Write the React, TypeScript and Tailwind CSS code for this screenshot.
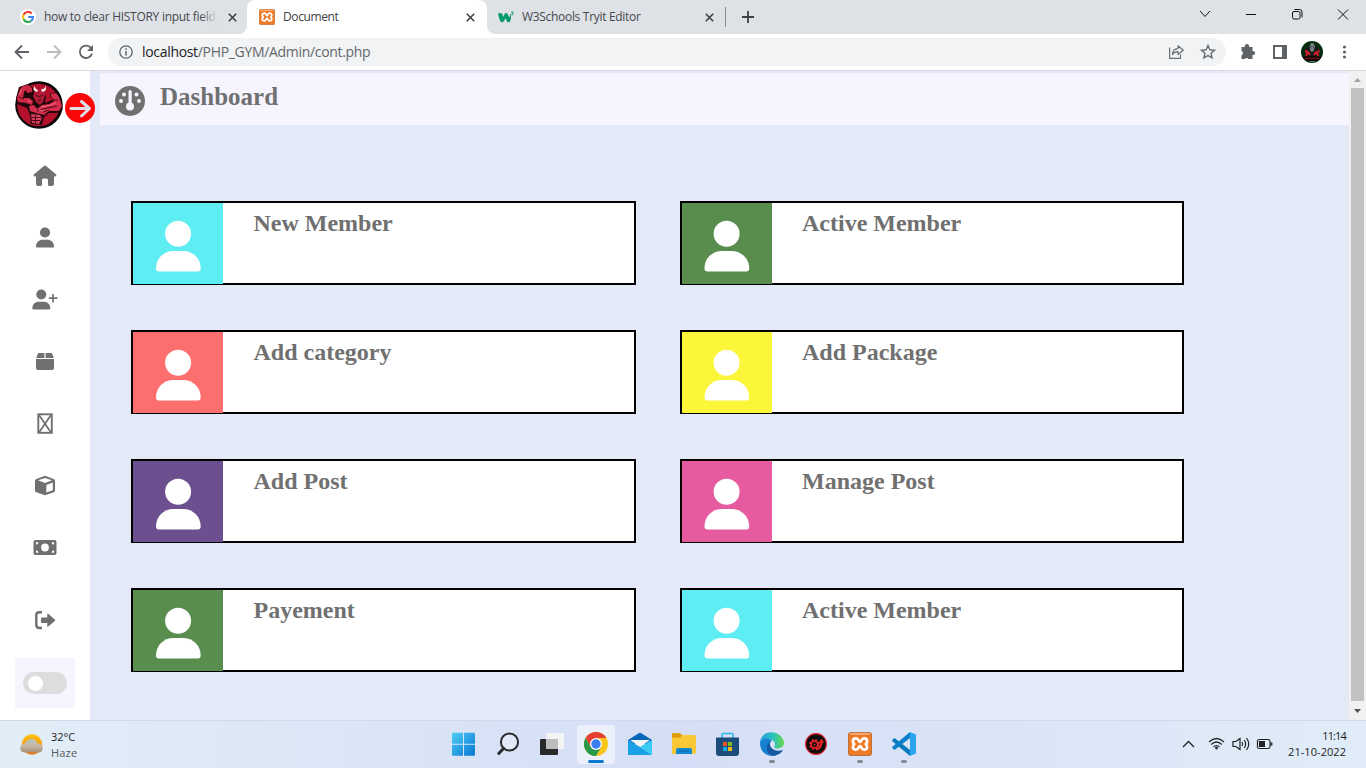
import React from "react";

const ui = "font-['Open_Sans','Noto_Sans',sans-serif]";

function XamppIcon({ size }: { size: number }) {
  return (
    <svg width={size} height={size} viewBox="0 0 24 24">
      <rect x="0.4" y="0.4" width="23.2" height="23.2" rx="2.5" fill="#ee7a28" stroke="#b5642a" strokeWidth="0.9" />
      <rect x="2" y="1.2" width="20" height="1.4" fill="#f9b98a" />
      <path
        d="M12 10C10.300 10 11 6.300 8 6.300C4.500 6.300 3.800 9.600 6.300 12C3.800 14.400 4.500 17.700 8 17.700C11 17.700 10.300 14 12 14C13.700 14 13 17.700 16 17.700C19.500 17.700 20.200 14.400 17.700 12C20.200 9.600 19.500 6.300 16 6.300C13 6.300 13.700 10 12 10Z"
        fill="none"
        stroke="#fff"
        strokeWidth="2.700"
        strokeLinejoin="round"
      />
    </svg>
  );
}

function CloseX() {
  return (
    <svg width="9" height="9" viewBox="0 0 9 9" className="shrink-0">
      <path d="M0.8 0.8 8.2 8.2M8.2 0.8 0.8 8.2" stroke="#3c4043" strokeWidth="1.6" />
    </svg>
  );
}

function TabStrip() {
  return (
    <div className="flex h-[34px] bg-white">
      <div className="flex w-[247px] items-center rounded-br-lg bg-[#dee1e6] pl-5">
        <svg width="16" height="16" viewBox="0 0 16 16" className="shrink-0">
          <circle cx="8" cy="8" r="8" fill="#fff" />
          <g fill="none" strokeWidth="2.2">
            <path d="M11.7 4.5A5 5 0 0 0 3.5 5.8" stroke="#ea4335" />
            <path d="M3.5 5.8A5 5 0 0 0 3.5 10.2" stroke="#fbbc05" />
            <path d="M3.5 10.2A5 5 0 0 0 11.2 11.8" stroke="#34a853" />
            <path d="M11.2 11.8A5 5 0 0 0 13 8H8.2" stroke="#4285f4" />
          </g>
        </svg>
        <div className="relative ml-2 w-[173px] whitespace-nowrap text-xs tracking-[-0.28px] text-[#45494d]">
          how to clear HISTORY input field
          <div className="absolute inset-y-0 right-0 w-4 bg-linear-to-r from-transparent to-[#dee1e6]" />
        </div>
        <div className="ml-[11px] flex">
          <CloseX />
        </div>
      </div>
      <div className="w-[240px] bg-[#dee1e6]">
        <div className="flex h-full items-center rounded-t-lg bg-white pl-3">
          <XamppIcon size={16} />
          <span className="ml-2 flex-1 text-xs tracking-[-0.38px] text-[#3c4043]">Document</span>
          <div className="mr-[12px]">
            <CloseX />
          </div>
        </div>
      </div>
      <div className="flex flex-1 items-center rounded-bl-lg bg-[#dee1e6] pl-[11px]">
        <svg width="17" height="12" viewBox="0 0 17 12">
          <path d="M0 2.2H4L5.2 6 7 2.2H9.2L11.2 6.5 12.5 4.5C11 3 12.8 2 13 4.2 13.2 7 12.5 11.3 10.6 11.3 9 11.3 8.4 9 7.6 7 6.5 9.5 5.5 11.3 4 11.3 2 11.3 1.2 7 0 2.2Z" fill="#04996a" />
          <path d="M13 1H15.3L14.3 2.2C16 2.2 15.6 4.4 13.2 3.8" fill="none" stroke="#04996a" strokeWidth=".9" />
        </svg>
        <span className="ml-[7px] w-[183px] text-xs tracking-[-0.31px] text-[#45494d]">W3Schools Tryit Editor</span>
        <CloseX />
        <div className="ml-[11px] h-5 w-px bg-[#8a8d91]" />
        <svg width="12" height="12" viewBox="0 0 12 12" className="ml-4">
          <path d="M6 0V12M0 6H12" stroke="#3c4043" strokeWidth="1.8" />
        </svg>
        <svg width="150" height="28" viewBox="0 0 150 28" className="mr-4 mb-[6px] ml-auto">
          <g fill="none" stroke="#111" strokeWidth="1">
            <path d="M0 11 5 16.5 10 11M46 14.5H56M138 9.5 148 19.5M148 9.5 138 19.5" />
            <rect x="92.500" y="11.5" width="7.500" height="7.500" rx="1.500" />
            <path d="M94.500 9.500H99.500Q102 9.500 102 12V17.500" />
          </g>
        </svg>
      </div>
    </div>
  );
}

function Toolbar() {
  return (
    <div className="flex h-[37px] items-center border-b border-[#d9dadc] bg-white">
      <svg width="108" height="36" viewBox="0 0 108 36" className="shrink-0">
        <g fill="none" strokeWidth="1.8">
          <path d="M29 18H16M22 11.500 15.500 18 22 24.500" stroke="#5f6368" />
          <path d="M47 18H60M54 11.500 60.500 18 54 24.500" stroke="#babcbe" />
          <path d="M91.300 14.500A6.200 6.200 0 1 0 92 19.500" stroke="#5f6368" />
        </g>
        <path d="M93 11V17H87Z" fill="#5f6368" />
      </svg>
      <div className="flex h-7 w-[1118px] items-center rounded-full bg-[#f1f3f4] pl-[11px]">
        <svg width="14" height="14" viewBox="0 0 14 14">
          <circle cx="7" cy="7" r="6.200" fill="none" stroke="#5f6368" strokeWidth="1.300" />
          <path d="M7 6V10.500M7 3.300V4.800" stroke="#5f6368" strokeWidth="1.500" />
        </svg>
        <span className="ml-[9px] text-sm tracking-[-0.32px] text-[#63676b]">
          <span className="text-[#202124]">localhost</span>/PHP_GYM/Admin/cont.php
        </span>
        <svg width="52" height="20" viewBox="0 0 52 20" className="mr-[7px] ml-auto">
          <g fill="none" stroke="#6b6f73" strokeWidth="1.200">
            <path d="M2.600 5.500V16.400H13.500V12.500" />
            <path d="M5.500 12.500C5.500 9 7.500 6.800 11 6.700V3.800L16.300 8.300 11 12.500V9.700C8.500 9.600 7 10.300 5.500 12.500Z" strokeLinejoin="round" />
            <path d="M41 3.500 42.900 7.700 47.500 8.200 44.100 11.300 45 15.800 41 13.500 37 15.800 37.900 11.300 34.500 8.200 39.100 7.700Z" strokeWidth="1.500" />
          </g>
        </svg>
      </div>
      <svg width="140" height="36" viewBox="0 0 140 36" className="shrink-0">
        <path d="M15.500 13H19A2.200 2.200 0 1 1 23 13H26.500V17.200A2 2 0 1 1 26.500 21V25H22.500A2.200 2.200 0 0 0 18.800 25H15.500V21.200A2.200 2.200 0 0 0 15.500 17Z" fill="#5f6368" />
        <path d="M47 11H61V25H47ZM49 13V23H56V13Z" fill="#5f6368" fillRule="evenodd" />
        <circle cx="86" cy="18" r="11" fill="#062c10" />
        <path d="M79 15 83 12H89L93 15V23H79Z" fill="#15191a" />
        <path d="M76.500 22.500H95.500Q94 26 91 27H81Q78 26 76.500 22.500Z" fill="#100506" />
        <path d="M80 22 82 18 84 21M88 21 90 18 92.500 22M80 16V19M92.500 16V19" stroke="#e02325" strokeWidth="1.700" fill="none" />
        <path d="M79 24.300H93" stroke="#8c1518" strokeWidth="1" />
        <path d="M84.500 10 86 8.500 88 10 89 13 87.500 17.500H84.500L83.500 13Z" fill="#777f80" />
        <path d="M84.500 13H85.500M87 13H88" stroke="#111" />
        <path d="M84 27.500H89" stroke="#5d8361" />
        <g fill="#5f6368">
          <circle cx="118.500" cy="13" r="1.600" />
          <circle cx="118.500" cy="18" r="1.600" />
          <circle cx="118.500" cy="23" r="1.600" />
        </g>
      </svg>
    </div>
  );
}

const navIcons: React.ReactNode[] = [
  <path key="home" d="M14 4.900Q15 4.200 16 4.900L26.200 13.500Q26.900 15.500 25 15.500H24V23Q24 25 22 25H19.500Q18 25 18 23.500V19Q18 17.500 16.500 17.500H13.500Q12 17.500 12 19V23.500Q12 25 10.500 25H8Q6 25 6 23V15.500H5Q3.100 15.500 3.800 13.500Z" />,
  <g key="user">
    <circle cx="15" cy="9.500" r="5.100" />
    <path d="M6 23.500C6 19.500 9 16.800 13 16.800H17C21 16.800 24 19.500 24 23.500Q24 24.600 23 24.600H7Q6 24.600 6 23.500Z" />
  </g>,
  <g key="user-plus">
    <circle cx="11.300" cy="9.500" r="5" />
    <path d="M2.300 23.500C2.300 19.500 5 16.800 9 16.800H13.500C17.500 16.800 20.300 19.500 20.300 23.500Q20.300 24.600 19.200 24.600H3.400Q2.300 24.600 2.300 23.500Z" />
    <path d="M23 9V17.500M18.800 13.200H27.500" stroke="#707070" strokeWidth="1.700" />
  </g>,
  <path key="box" d="M9.200 6H14.400V11H6.200L7.700 7Q8.100 6 9.200 6ZM15.600 6H20.800Q21.900 6 22.300 7L23.800 11H15.600ZM6 12H24V21Q24 23 22 23H8Q6 23 6 21Z" />,
  <g key="placeholder" fill="none" stroke="#707070">
    <rect x="8.300" y="5.300" width="13.500" height="18.500" strokeWidth="1.900" />
    <path d="M9 6 21 23.500M21 6 9 23.500" strokeWidth="1.700" />
  </g>,
  <path key="cube" fillRule="evenodd" d="M15 4.700 23.700 7.900Q25 8.500 25 9.700V19.400Q25 20.700 23.800 21.200L15 24.200 6.200 21.200Q5 20.700 5 19.400V9.700Q5 8.500 6.300 7.900ZM15 6.900 8 9.300 15 11.900 22 9.300ZM16.300 14V21.400L22.800 19.200V11.500Z" />,
  <g key="money">
    <rect x="3.500" y="7" width="23" height="15" rx="2" />
    <circle cx="15" cy="14.500" r="3.900" fill="#fff" />
    <path d="M6 9.300H8.500Q8.300 11.500 6 11.700ZM24 9.300H21.500Q21.700 11.500 24 11.700ZM6 19.700H8.500Q8.300 17.500 6 17.300ZM24 19.700H21.500Q21.700 17.500 24 17.300Z" fill="#fff" />
  </g>,
];

function BullLogo() {
  return (
    <svg width="48" height="48" viewBox="0 0 48 48">
      <circle cx="24" cy="24" r="23.800" fill="#090506" />
      <circle cx="23.500" cy="24" r="21.300" fill="#b3102b" />
      <path d="M4 6 13 3 18 7 19 12 28 12 31 15 30 22 35 20 39 18 35 16 35 13 41 11 46 18 47.500 28 43 32 34 32 29 36 27 44 16 43 15 34 12 27 2 23 1 17Z" fill="#22070d" />
      <path d="M5 8 8 5 13 4 17 7 17 11 12 12 11 9 9 11 8 17 14 17 18 20 17 24 11 22 3 21 2 17Z" fill="#cf2846" />
      <path d="M20 11 24 9 28 10 30 14 28 21 25 24 21 21 18 15Z" fill="#b01c35" />
      <path d="M20 10Q17 8 20 5Q20 8 23 9L22 11ZM27 11Q33 10 30 4Q31 8 26 8.500Z" fill="#f8f0ee" />
      <path d="M14 25 19 24 22 28 27 24 34 23 39 20 38 17 36 16 36 13 41 12 44 16 47 25 44 30 34 30 29 34 21 32 15 30Z" fill="#d52c4b" />
      <path d="M16 33 25 34 27 37 24 43 17 42Z" fill="#d93e58" />
      <path d="M20.500 34V43M16.500 36.500H26M17 39.500H25M22 30 32 27 42 25M37 19 43 19M21 14 24 16 28 14M23 20 26 19M4 16 9 18M34 29 28 31" stroke="#4b0b1b" strokeWidth="1" fill="none" />
      <path d="M26 26 34 24.500 41 22M4 14 7 8M12 19 16 21M24 29 29 30" stroke="#ee6880" strokeWidth="1" fill="none" />
    </svg>
  );
}

function Sidebar() {
  return (
    <aside className="relative flex w-[90px] shrink-0 flex-col bg-white">
      <div className="h-[74px] pt-[10px] pl-[15px]">
        <BullLogo />
      </div>
      <button className="absolute top-[22px] left-[65px] z-10 size-[30px] rounded-full bg-[#fb0707]">
        <svg width="30" height="30" viewBox="0 0 30 30">
          <path d="M6 15.500H24M16.500 8.500 24.500 15.500 16.500 23" fill="none" stroke="#e1dfe5" strokeWidth="3" strokeLinecap="round" strokeLinejoin="round" />
        </svg>
      </button>
      <nav className="flex flex-col">
        {navIcons.map((icon, i) => (
          <a key={i} className="flex h-[62px] items-center justify-center">
            <svg width="30" height="30" viewBox="0 0 30 30" fill="#707070">
              {icon}
            </svg>
          </a>
        ))}
      </nav>
      <a className="mt-[26px] flex justify-center">
        <svg width="30" height="30" viewBox="0 0 30 30" fill="#707070">
          <path d="M12 7.300H9.500Q6.300 7.300 6.300 10V20Q6.300 23 9.500 23H12" fill="none" stroke="#707070" strokeWidth="2.400" />
          <path d="M12 12.500H17.300V9Q17.300 8.200 18 8.600L25 14.700Q25.400 15.200 25 15.700L18 21.800Q17.300 22.100 17.300 21.300V18H12Q11 18 11 17V13.500Q11 12.500 12 12.500Z" />
        </svg>
      </a>
      <div className="mt-[23px] ml-[15px] flex h-[50px] w-[60px] items-center justify-center bg-[#f6f5ff]">
        <div className="flex h-[22px] w-11 items-center rounded-full bg-[#ddd] pl-[5px]">
          <div className="size-[15px] rounded-full bg-white" />
        </div>
      </div>
    </aside>
  );
}

const cards = [
  { title: "New Member", color: "bg-[#5eedf3]" },
  { title: "Active Member", color: "bg-[#588d4e]" },
  { title: "Add category", color: "bg-[#fd6f6f]" },
  { title: "Add Package", color: "bg-[#fbf63a]" },
  { title: "Add Post", color: "bg-[#6b4f8e]" },
  { title: "Manage Post", color: "bg-[#e65b9f]" },
  { title: "Payement", color: "bg-[#588d4e]" },
  { title: "Active Member", color: "bg-[#5eedf3]" },
];

function Dashboard() {
  return (
    <main className="flex-1 bg-[#e3e9f7] pt-[2px] pl-[10px] font-['Liberation_Serif',serif] font-bold text-[#707070]">
      <header className="flex h-[52px] bg-[#f6f5ff] pl-[15px]">
        <svg width="30" height="30" viewBox="0 0 30 30" className="mt-[13px]">
          <circle cx="15" cy="15" r="15" fill="#707070" />
          <g fill="#f6f5ff">
            <circle cx="9" cy="8.500" r="2" />
            <circle cx="21.500" cy="8.500" r="2" />
            <circle cx="6" cy="15" r="2" />
            <circle cx="24" cy="15" r="2" />
            <circle cx="15" cy="20.500" r="4" />
            <rect x="13.500" y="4" width="3.200" height="17" rx="1.600" />
          </g>
        </svg>
        <h1 className="ml-[15px] pt-[9px] text-[25px] leading-[30px]">Dashboard</h1>
      </header>
      <div className="mt-[76px] ml-[31px] grid grid-cols-[505px_504px] gap-x-11 gap-y-[45px]">
        {cards.map((c, i) => (
          <section key={i} className="flex h-[84px] border-2 border-black bg-white">
            <div className={`h-[80.500px] w-[90px] ${c.color}`}>
              <svg width="90" height="80" viewBox={i % 2 ? "0.5 0 90 80" : "0 0 90 80"} fill="#fff">
                <circle cx="45.100" cy="30.800" r="13" />
                <path d="M23 65.500C23 55.500 30.500 48 40.500 48H50C60 48 67.700 55.500 67.700 65.500Q67.700 68.400 64.800 68.400H25.900Q23 68.400 23 65.500Z" />
              </svg>
            </div>
            <h2 className={`${i % 2 ? "ml-[30px]" : "ml-[30.5px]"} pt-[5px] text-2xl leading-[30px]`}>{c.title}</h2>
          </section>
        ))}
      </div>
    </main>
  );
}

function Scrollbar() {
  return (
    <div className="flex w-[17px] flex-col items-center bg-[#f1f1f1]">
      <svg width="17" height="17" viewBox="0 0 17 17">
        <path d="M5 11H12L8.500 7Z" fill="#a3a3a3" />
      </svg>
      <div className="w-[13px] flex-1 bg-[#c1c1c1]" />
      <svg width="17" height="19" viewBox="0 0 17 19">
        <path d="M5 8H12L8.500 12Z" fill="#505050" />
      </svg>
    </div>
  );
}

const apps: React.ReactNode[] = [
  <svg key="win" width="24" height="24" viewBox="0 0 24 24">
    <defs><linearGradient id="w" x2="1" y2="1"><stop stopColor="#50cdf6" /><stop offset="1" stopColor="#0576d3" /></linearGradient></defs>
    <path d="M0 2Q0 .8 1.200 .8H11V11.800H0ZM12 .8H21.800Q23 .8 23 2V11.800H12ZM0 12.800H11V23.800H1.200Q0 23.800 0 22.500ZM12 12.800H23V22.500Q23 23.800 21.800 23.800H12Z" fill="url(#w)" />
  </svg>,
  <svg key="search" width="24" height="24" viewBox="0 0 24 24">
    <circle cx="13.500" cy="10" r="8.600" fill="#e9eefa" fillOpacity=".5" stroke="#292c2d" strokeWidth="2" />
    <path d="M7.400 16.400 2.800 21.500" stroke="#292c2d" strokeWidth="3" strokeLinecap="round" />
  </svg>,
  <svg key="tasks" width="24" height="24" viewBox="0 0 24 24">
    <rect y="7" width="18" height="16" rx="1" fill="#292929" />
    <rect x="6" y="1" width="18" height="16" rx="1" fill="#f4f4f5" />
    <path d="M6 7H18V17H7Q6 17 6 16Z" fill="#bdbdbd" />
  </svg>,
  <svg key="chrome" width="24" height="24" viewBox="0 0 24 24">
    <circle cx="12" cy="12" r="12" fill="#fbc51c" />
    <path d="M1.600 6A12 12 0 0 1 22.400 6H12L6.800 15Z" fill="#e63f35" />
    <path d="M1.600 6A12 12 0 0 0 12 24L17.200 15H6.800Z" fill="#279847" />
    <circle cx="12" cy="12" r="6" fill="#fff" />
    <circle cx="12" cy="12" r="4.700" fill="#377def" />
  </svg>,
  <svg key="mail" width="24" height="24" viewBox="0 0 24 24">
    <path d="M0 8 12 .5 24 8V12H0Z" fill="#0866b8" />
    <path d="M2 8H22L12 15Z" fill="#f1f5f7" />
    <path d="M0 8 12 15 24 23H0Z" fill="#1aa0e6" />
    <path d="M24 8 12 15 24 23Z" fill="#3acbf5" />
  </svg>,
  <svg key="files" width="24" height="24" viewBox="0 0 24 24">
    <path d="M0 2.500Q0 1.200 1.200 1.200H8L10 3H22.500Q24 3 24 5V20Q24 22 22 22H0Z" fill="#f9c839" />
    <path d="M0 2.500Q0 1.200 1.200 1.200H8L10 3 8.500 5.500H0Z" fill="#dd9a0a" />
    <path d="M4 22V18Q4 16 6 16H18Q20 16 20 18V22Z" fill="#1287d2" />
    <path d="M7.500 19H16.500" stroke="#0662a9" />
  </svg>,
  <svg key="store" width="24" height="24" viewBox="0 0 24 24">
    <path d="M6 6V2.800Q6 1.500 7.300 1.500H15.700Q17 1.500 17 2.800V6" fill="none" stroke="#28b5ea" strokeWidth="1.500" />
    <path d="M0 5.500H23V21Q23 24 20 24H3Q0 24 0 21Z" fill="#1b4c7a" />
    <path d="M7 10H11V14H7Z" fill="#ef5527" /><path d="M12 10H16V14H12Z" fill="#7fba16" />
    <path d="M7 15H11V19H7Z" fill="#12aaef" /><path d="M12 15H16V19H12Z" fill="#fdb812" />
  </svg>,
  <svg key="edge" width="24" height="24" viewBox="0 0 24 24">
    <defs>
      <linearGradient id="e" x2="1"><stop stopColor="#249de0" /><stop offset=".55" stopColor="#2bc3bd" /><stop offset="1" stopColor="#67d847" /></linearGradient>
    </defs>
    <path d="M0 11C0-2 20-4 24 10C25 17 15 18 14 15C17 11 13 7 8 7C4 7 1 9 0 12Z" fill="url(#e)" />
    <path d="M0 12C0 7 9 5 12 9C7 12 10 20 18 20Q21 20 23 18C17 27 1 26 0 12Z" fill="#167fd1" />
    <path d="M10 10C3 15 9 26 15 23.500Q20 22.500 23 18C18 20 11 18 10 13Z" fill="#1559a3" />
  </svg>,
  <svg key="gear" width="24" height="24" viewBox="0 0 24 24">
    <circle cx="12" cy="12" r="10.400" fill="#090c0d" stroke="#d82228" strokeWidth="1.200" />
    <circle cx="10.500" cy="12.500" r="4.300" fill="none" stroke="#e8252b" strokeWidth="2.300" strokeDasharray="2 1.400" />
    <circle cx="10.500" cy="12.500" r="3.200" fill="none" stroke="#e8252b" strokeWidth="1.400" />
    <circle cx="10.500" cy="12.500" r="1" fill="#e8252b" />
    <path d="M12 17.500Q17.500 16.500 17.500 10" fill="none" stroke="#e8252b" strokeWidth="2" />
    <path d="M14.500 10.500 17.800 6.500 20.200 11Z" fill="#e8252b" />
  </svg>,
  <XamppIcon key="xampp" size={24} />,
  <svg key="code" width="24" height="24" viewBox="0 0 24 24">
    <path d="M.4 7.800 2.500 6.100 18 18V24L.4 9.300Z" fill="#0878bd" />
    <path d="M.4 16.200 2.500 17.900 18 6V0L.4 14.700Z" fill="#087fc8" />
    <path d="M18 0 24 2.500V21.500L18 24Z" fill="#2aa4ef" />
  </svg>,
];

const indicators: Record<number, string> = {
  3: "w-4 bg-[#0878d3]",
  7: "w-[6px] bg-[#858a95]",
  9: "w-[6px] bg-[#858a95]",
  10: "w-[6px] bg-[#858a95]",
};

function Taskbar() {
  return (
    <footer className="flex h-12 border-t border-[#d0daea] bg-linear-to-r from-[#e2eef7] via-[#d5def6] to-[#e0edf8] text-[#1c1c1c]">
      <div className="flex w-[442px] items-center pl-5">
        <svg width="24" height="22" viewBox="0 0 24 22">
          <defs>
            <linearGradient id="sun" x2="0" y2="1"><stop stopColor="#ffc50b" /><stop offset="1" stopColor="#ee7316" /></linearGradient>
            <linearGradient id="cloud" x2="0" y2="1"><stop stopColor="#b5c2c8" /><stop offset=".5" stopColor="#c4b9a5" /><stop offset="1" stopColor="#aa8c74" /></linearGradient>
          </defs>
          <circle cx="12" cy="10.500" r="10.200" fill="url(#sun)" />
          <path d="M4.500 18.500C-1.500 18.500-1 9.500 5 9.500C7.500 3.500 15.500 3.500 17.500 9.500C24 9 24.500 18.500 18.500 18.500Z" fill="url(#cloud)" />
        </svg>
        <div className="ml-[7px] text-[11px] leading-4">
          <div>32°C</div>
          <div className="tracking-[0.2px] text-[#555b60]">Haze</div>
        </div>
      </div>
      <div className="flex pt-1">
        {apps.map((app, i) => (
          <div key={i} className="flex w-11 justify-center">
            <div className={`flex h-[39px] w-[38px] flex-col items-center pt-[7px] ${i === 3 ? "rounded bg-[#ebf0fb]" : ""}`}>
              {app}
              {indicators[i] && <div className={`mt-[4px] h-[3px] rounded-full ${indicators[i]}`} />}
            </div>
          </div>
        ))}
      </div>
      <div className="ml-auto flex items-center pr-5">
        <svg width="92" height="20" viewBox="0 0 92 20" className="mr-[13px] mb-px">
          <g fill="none" stroke="#202426" strokeWidth="1.200">
            <path d="M1 13 6.500 7.500 12 13" strokeWidth="1.400" />
            <path d="M27 8Q34.500 1 42 8M29.200 10.500Q34.500 5.500 39.800 10.500M31.500 13Q34.500 10 37.500 13" />
            <path d="M51 7.500H54L58 4.500V15.500L54 12.500H51ZM60 8Q61.500 10 60 12M62.300 6Q65 10 62.300 14M64.500 4Q69 10 64.500 16" />
            <rect x="75.500" y="5.500" width="12.500" height="9" rx="1.800" />
            <path d="M89.500 8.500V11.500" strokeWidth="1.800" />
          </g>
          <circle cx="34.500" cy="14" r="1.400" fill="#202426" />
          <rect x="77" y="7" width="6" height="6" fill="#202426" />
        </svg>
        <div className="mb-[2px] w-[59px] text-right text-[11px] leading-4 whitespace-nowrap">
          <div className="tracking-[-0.85px]">11:14</div>
          <div className="tracking-[0.05px]">21-10-2022</div>
        </div>
      </div>
    </footer>
  );
}

export default function App() {
  return (
    <div className={`flex h-[768px] w-[1366px] flex-col overflow-hidden ${ui}`}>
      <TabStrip />
      <Toolbar />
      <div className="flex flex-1">
        <Sidebar />
        <Dashboard />
        <Scrollbar />
      </div>
      <Taskbar />
    </div>
  );
}
